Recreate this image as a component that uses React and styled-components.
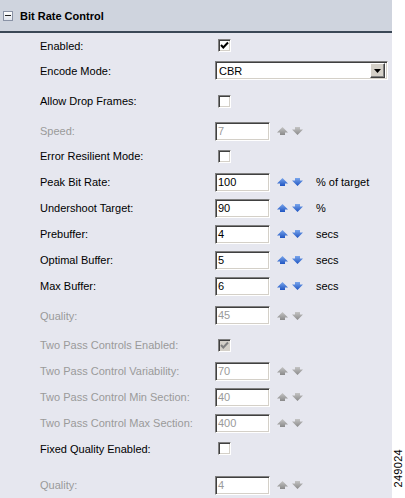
import React from 'react';
import styled, { createGlobalStyle } from 'styled-components';

const Global = createGlobalStyle`
  html, body { margin: 0; padding: 0; background: #fff; }
  body { font-family: "Liberation Sans", Arial, sans-serif; font-size: 11px; color: #000; }
`;

const Page = styled.div`
  display: flex;
  width: 405px;
  height: 498px;
  overflow: hidden;
`;

const Panel = styled.div`
  width: 392px;
  flex: none;
  background: #e6e7ef;
  display: flex;
  flex-direction: column;
`;

const Header = styled.div`
  height: 31px;
  flex: none;
  background: #cfd4de;
  border-bottom: 2px solid #3b4856;
  display: flex;
  align-items: center;
  gap: 7px;
  padding-left: 3px;
`;

const MinusBox = styled.div`
  width: 8px;
  height: 8px;
  border: 1px solid #8a93a6;
  background: linear-gradient(#ffffff, #dfe3ec);
  display: flex;
  align-items: center;
  justify-content: center;
  &::after {
    content: '';
    width: 6px;
    height: 1px;
    background: #222;
  }
`;

const Title = styled.div`
  font-weight: bold;
  font-size: 11px;
`;

const Body = styled.div`
  display: flex;
  flex-direction: column;
  padding-left: 40px;
`;

const Row = styled.div`
  display: flex;
  align-items: center;
  height: ${p => p.$h}px;
  flex: none;
`;

const Label = styled.div`
  width: 175px;
  flex: none;
  color: ${p => (p.$disabled ? '#9a9a9a' : '#000')};
  white-space: nowrap;
`;

const Control = styled.div`
  display: flex;
  align-items: center;
`;

const TextBox = styled.div`
  box-sizing: border-box;
  width: 55px;
  height: 19px;
  background: #fff;
  border: 1px solid;
  border-color: #808080 #ffffff #ffffff #808080;
  box-shadow: inset 1px 1px 0 #404040, inset -1px -1px 0 #d4d0c8;
  padding: 0 0 0 2px;
  line-height: 17px;
  color: ${p => (p.$disabled ? '#9a9a9a' : '#000')};
`;

const Spinner = styled.div`
  display: flex;
  align-items: center;
  gap: 4px;
  margin-left: 7px;
`;

const Unit = styled.div`
  margin-left: 13px;
`;

const CheckBox = styled.div`
  box-sizing: border-box;
  width: 13px;
  height: 13px;
  margin-left: 3px;
  background: ${p => (p.$disabled ? '#d4d0c8' : '#fff')};
  border: 1px solid;
  border-color: #808080 #ffffff #ffffff #808080;
  box-shadow: inset 1px 1px 0 #404040, inset -1px -1px 0 #d4d0c8;
  display: flex;
  align-items: center;
  justify-content: center;
`;

const Select = styled.div`
  box-sizing: border-box;
  width: 173px;
  height: 19px;
  background: #fff;
  border: 1px solid;
  border-color: #808080 #ffffff #ffffff #808080;
  box-shadow: inset 1px 1px 0 #404040, inset -1px -1px 0 #d4d0c8;
  display: flex;
  align-items: center;
  padding: 2px 2px 2px 3px;
`;

const SelectText = styled.div`
  flex: 1;
`;

const DropButton = styled.div`
  box-sizing: border-box;
  width: 15px;
  height: 15px;
  background: #d4d0c8;
  border: 1px solid;
  border-color: #ffffff #404040 #404040 #ffffff;
  box-shadow: inset -1px -1px 0 #808080;
  display: flex;
  align-items: center;
  justify-content: center;
`;

const Side = styled.div`
  flex: 1;
  background: #fff;
  display: flex;
  align-items: flex-end;
  justify-content: center;
  padding-bottom: 10px;
`;

const FigNum = styled.div`
  writing-mode: vertical-rl;
  transform: rotate(180deg);
  font-size: 11px;
  line-height: 11px;
  letter-spacing: 0.3px;
`;

const Arrow = ({ dir, disabled }) => {
  const id = `g-${dir}-${disabled ? 'd' : 'a'}`;
  const c1 = disabled ? '#c4c4c4' : '#7aa6ec';
  const c2 = disabled ? '#8a8a8a' : '#1f55c2';
  const d =
    dir === 'up'
      ? 'M5.5 0 L11 5.5 L8 5.5 L8 8 L3 8 L3 5.5 L0 5.5 Z'
      : 'M3 0 L8 0 L8 2.5 L11 2.5 L5.5 8 L0 2.5 L3 2.5 Z';
  return (
    <svg width="11" height="8" viewBox="0 0 11 8">
      <defs>
        <linearGradient id={id} x1="0" y1="0" x2="0" y2="1">
          <stop offset="0" stopColor={c1} />
          <stop offset="1" stopColor={c2} />
        </linearGradient>
      </defs>
      <path d={d} fill={`url(#${id})`} />
    </svg>
  );
};

const Check = ({ disabled }) => (
  <svg width="9" height="9" viewBox="0 0 9 9">
    <path d="M1 4 L3.3 6.5 L8 1.5" fill="none" stroke={disabled ? '#808080' : '#000'} strokeWidth="2" />
  </svg>
);

const NumberField = ({ value, unit, disabled }) => (
  <Control>
    <TextBox $disabled={disabled}>{value}</TextBox>
    <Spinner>
      <Arrow dir="up" disabled={disabled} />
      <Arrow dir="down" disabled={disabled} />
    </Spinner>
    {unit && <Unit>{unit}</Unit>}
  </Control>
);

const rows = [
  { label: 'Enabled:', h: 25, type: 'check', checked: true },
  { label: 'Encode Mode:', h: 25, type: 'select', value: 'CBR' },
  { label: 'Allow Drop Frames:', h: 36, type: 'check' },
  { label: 'Speed:', h: 24, type: 'num', value: '7', disabled: true },
  { label: 'Error Resilient Mode:', h: 26, type: 'check' },
  { label: 'Peak Bit Rate:', h: 26, type: 'num', value: '100', unit: '% of target' },
  { label: 'Undershoot Target:', h: 26, type: 'num', value: '90', unit: '%' },
  { label: 'Prebuffer:', h: 26, type: 'num', value: '4', unit: 'secs' },
  { label: 'Optimal Buffer:', h: 26, type: 'num', value: '5', unit: 'secs' },
  { label: 'Max Buffer:', h: 26, type: 'num', value: '6', unit: 'secs' },
  { label: 'Quality:', h: 33, type: 'num', value: '45', disabled: true },
  { label: 'Two Pass Controls Enabled:', h: 26, type: 'check', checked: true, disabled: true },
  { label: 'Two Pass Control Variability:', h: 26, type: 'num', value: '70', disabled: true },
  { label: 'Two Pass Control Min Section:', h: 26, type: 'num', value: '40', disabled: true },
  { label: 'Two Pass Control Max Section:', h: 26, type: 'num', value: '400', disabled: true },
  { label: 'Fixed Quality Enabled:', h: 25, type: 'check' },
  { label: 'Quality:', h: 48, type: 'num', value: '4', disabled: true },
];

export default function App() {
  return (
    <>
      <Global />
      <Page>
        <Panel>
          <Header>
            <MinusBox />
            <Title>Bit Rate Control</Title>
          </Header>
          <Body>
            {rows.map((r, i) => (
              <Row key={i} $h={r.h}>
                <Label $disabled={r.disabled}>{r.label}</Label>
                {r.type === 'check' && (
                  <CheckBox $disabled={r.disabled}>
                    {r.checked && <Check disabled={r.disabled} />}
                  </CheckBox>
                )}
                {r.type === 'select' && (
                  <Select>
                    <SelectText>{r.value}</SelectText>
                    <DropButton>
                      <svg width="7" height="4" viewBox="0 0 7 4">
                        <path d="M0 0 L7 0 L3.5 4 Z" fill="#000" />
                      </svg>
                    </DropButton>
                  </Select>
                )}
                {r.type === 'num' && (
                  <NumberField value={r.value} unit={r.unit} disabled={r.disabled} />
                )}
              </Row>
            ))}
          </Body>
        </Panel>
        <Side>
          <FigNum>249024</FigNum>
        </Side>
      </Page>
    </>
  );
}
